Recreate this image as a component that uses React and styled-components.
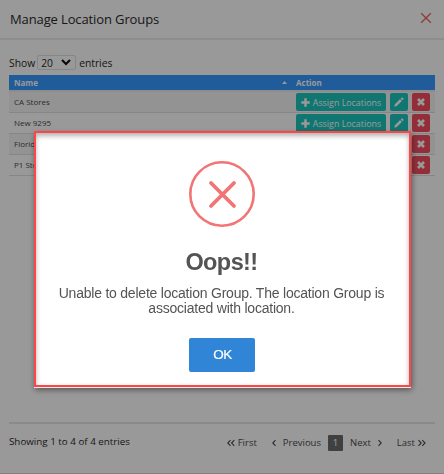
import React, { useState } from 'react';
import styled, { createGlobalStyle } from 'styled-components';

const groups = [
  { id: 1, name: 'CA Stores' },
  { id: 2, name: 'New 9295' },
  { id: 3, name: 'Florida Stores' },
  { id: 4, name: 'P1 Stores' },
];

const CloseIcon = () => (
  <svg width="12" height="12" viewBox="0 0 12 12" fill="none" stroke="#f0615a" strokeWidth="1.3">
    <path d="M1.2 1.2l9.6 9.6M10.8 1.2l-9.6 9.6" />
  </svg>
);

const PlusIcon = () => (
  <svg width="9" height="9" viewBox="0 0 9 9" fill="none" stroke="#fff" strokeWidth="2.5">
    <path d="M4.5 0.3v8.4M0.3 4.5h8.4" />
  </svg>
);

const PencilIcon = () => (
  <svg width="10" height="10" viewBox="0 0 10 10" fill="#fff">
    <path d="M0.3 9.7l0.6-2.4 5.2-5.2 1.8 1.8-5.2 5.2zM6.7 1.5l0.9-0.9q0.5-0.4 0.9 0l0.9 0.9q0.4 0.4 0 0.9l-0.9 0.9z" />
  </svg>
);

const DeleteIcon = () => (
  <svg width="8" height="8" viewBox="0 0 8 8" fill="none" stroke="#fff" strokeWidth="2.6">
    <path d="M1 1l6 6M7 1l-6 6" />
  </svg>
);

const Chevron = ({ left, double }) => (
  <svg width={double ? 8 : 4} height="8" viewBox={double ? '0 0 8 8' : '0 0 4 8'} fill="none" stroke="#4a4a4a" strokeWidth="1.1">
    <path d={left ? 'M3.5 1.2L0.8 4l2.7 2.8' : 'M0.5 1.2l2.7 2.8L0.5 6.8'} />
    {double && <path d={left ? 'M7.3 1.2L4.6 4l2.7 2.8' : 'M4.3 1.2L7 4 4.3 6.8'} />}
  </svg>
);

const App = () => {
  const [showError, setShowError] = useState(true);

  return (
    <>
      <GlobalStyle />
      <Panel>
        <Header>
          <Title>Manage Location Groups</Title>
          <CloseIcon />
        </Header>
        <Body>
          <Length>
            Show
            <LengthSelect>
              20
              <svg width="10" height="7" viewBox="0 0 10 7" fill="none" stroke="#111" strokeWidth="2.1">
                <path d="M1 1l4 4 4-4" />
              </svg>
            </LengthSelect>
            entries
          </Length>
          <TableHead>
            <span>Name</span>
            <svg width="5" height="3" viewBox="0 0 5 3" fill="#fff">
              <path d="M0 3L2.5 0 5 3z" />
            </svg>
            <span>Action</span>
          </TableHead>
          {groups.map((group, index) => (
            <Row key={group.id} $odd={index % 2 === 0}>
              <GroupName>{group.name}</GroupName>
              <Actions>
                <ActionButton $width="90px">
                  <PlusIcon />
                  Assign Locations
                </ActionButton>
                <ActionButton $width="18px">
                  <PencilIcon />
                </ActionButton>
                <ActionButton $width="18px" $danger onClick={() => setShowError(true)}>
                  <DeleteIcon />
                </ActionButton>
              </Actions>
            </Row>
          ))}
        </Body>
        <Footer>
          <Info>Showing 1 to 4 of 4 entries</Info>
          <Pager>
            <PageLink><Chevron left double />First</PageLink>
            <PageLink $gap="7px" $before="15px"><Chevron left />Previous</PageLink>
            <CurrentPage>1</CurrentPage>
            <PageLink $gap="7px" $before="7px">Next<Chevron /></PageLink>
            <PageLink $before="15px">Last<Chevron double /></PageLink>
          </Pager>
        </Footer>
      </Panel>
      {showError && (
        <Overlay>
          <Dialog>
            <svg width="66" height="66" viewBox="0 0 66 66" fill="none" stroke="#f27474">
              <circle cx="33" cy="33" r="31.7" strokeWidth="2.6" />
              <path d="M22 22l23 23M45 22L22 45" strokeWidth="3.8" strokeLinecap="round" />
            </svg>
            <DialogTitle>Oops!!</DialogTitle>
            <Message>Unable to delete location Group. The location Group is associated with location.</Message>
            <OkButton onClick={() => setShowError(false)}>OK</OkButton>
          </Dialog>
        </Overlay>
      )}
    </>
  );
};

const GlobalStyle = createGlobalStyle`
  * {
    box-sizing: border-box;
  }
  body {
    margin: 0;
    font-family: "Open Sans", sans-serif;
    color: #2a2a2a;
    overflow: hidden;
  }
  svg {
    display: block;
    flex: none;
  }
  button {
    font-family: inherit;
    border: none;
    cursor: pointer;
  }
`;

const Panel = styled.div`
  display: flex;
  flex-direction: column;
  height: 474px;
  background: #fff;
  border-bottom: 1px solid #d8d8d8;
`;

const Header = styled.div`
  display: flex;
  align-items: center;
  justify-content: space-between;
  height: 40px;
  padding: 0 12px 2px 10px;
  border-bottom: 2px solid #ebebeb;
`;

const Title = styled.h1`
  margin: 2px 0 0;
  font-size: 13px;
  font-weight: 400;
  line-height: 18px;
  letter-spacing: -0.12px;
`;

const Body = styled.div`
  flex: 1;
  padding: 15px 9px 0;
`;

const Length = styled.div`
  display: flex;
  align-items: center;
  height: 15px;
  margin-bottom: 5px;
  font-size: 10.3px;
`;

const LengthSelect = styled.div`
  display: flex;
  align-items: center;
  justify-content: space-between;
  width: 39px;
  height: 15px;
  margin: 0 3px 0 2px;
  padding: 0 4px 0 3px;
  border: 1px solid #e0e0e0;
  border-radius: 2px;
`;

const TableHead = styled.div`
  display: grid;
  grid-template-columns: 268px 14px 1fr;
  align-items: center;
  height: 17px;
  padding-left: 5px;
  border-bottom: 2px solid #ebebeb;
  background: #3699ff;
  background-clip: padding-box;
  color: #fff;
  font-size: 8px;
  font-weight: 700;
`;

const Row = styled.div`
  display: flex;
  align-items: center;
  justify-content: space-between;
  height: 21px;
  padding: 0 5px;
  background: ${(props) => (props.$odd ? '#f6f6f6' : '#fff')};
  border-bottom: 1px solid #e0e0e0;
  color: #4a4a4a;
  font-size: 8px;
`;

const GroupName = styled.span`
  padding-bottom: 1px;
`;

const Actions = styled.div`
  display: flex;
  gap: 4px;
`;

const ActionButton = styled.button`
  display: flex;
  align-items: center;
  justify-content: center;
  gap: 3px;
  width: ${(props) => props.$width};
  height: 18px;
  padding: 0;
  border-radius: 2px;
  background: ${(props) => (props.$danger ? '#f64e60' : '#1bc5bd')};
  color: #fff;
  font-size: 8.9px;
  white-space: nowrap;
`;

const Footer = styled.div`
  display: flex;
  justify-content: space-between;
  height: 51px;
  margin: 0 9px;
  padding-top: 10px;
  border-top: 2px solid #e6e6e6;
`;

const Info = styled.div`
  font-size: 9.8px;
  line-height: 15px;
`;

const Pager = styled.div`
  display: flex;
  align-items: center;
  height: 17px;
  padding-right: 9px;
`;

const PageLink = styled.div`
  display: flex;
  align-items: center;
  gap: ${(props) => props.$gap || '3px'};
  margin-left: ${(props) => props.$before || '0'};
  font-size: 9.5px;
  color: #4a4a4a;
`;

const CurrentPage = styled.div`
  width: 15px;
  height: 16px;
  margin-left: 7px;
  border-radius: 1px;
  background: #6c6c6c;
  color: #fff;
  font-size: 9.5px;
  line-height: 16px;
  text-align: center;
`;

const Overlay = styled.div`
  position: fixed;
  inset: 0;
  display: flex;
  align-items: flex-start;
  padding: 131px 0 0 34px;
  background: rgba(0, 0, 0, 0.4);
`;

const Dialog = styled.div`
  display: flex;
  flex-direction: column;
  align-items: center;
  width: 377px;
  height: 256px;
  padding: 28px 16px 0 14px;
  border: 2px solid #ff4545;
  background: #fff;
  box-shadow: 0 1px 0 #eee, 1px 3px 6px rgba(0, 0, 0, 0.45), inset 0 3px 5px rgba(0, 0, 0, 0.3);
  color: #545454;
  font-family: "Liberation Sans", Arial, sans-serif;
`;

const DialogTitle = styled.h2`
  margin: 20px 0 0;
  font-size: 23.5px;
  line-height: 30px;
  font-weight: 700;
  letter-spacing: -0.6px;
`;

const Message = styled.p`
  width: 340px;
  margin: 9px 0 0;
  font-size: 14px;
  line-height: 15px;
  letter-spacing: -0.22px;
  text-align: center;
`;

const OkButton = styled.button`
  width: 66px;
  height: 34px;
  margin-top: 22px;
  padding: 0 0 1px 2px;
  border-radius: 2px;
  background: #3085d6;
  color: #fff;
  font-size: 13.5px;
  letter-spacing: -0.4px;
  -webkit-text-stroke: 0.2px #fff;
`;

export default App;
